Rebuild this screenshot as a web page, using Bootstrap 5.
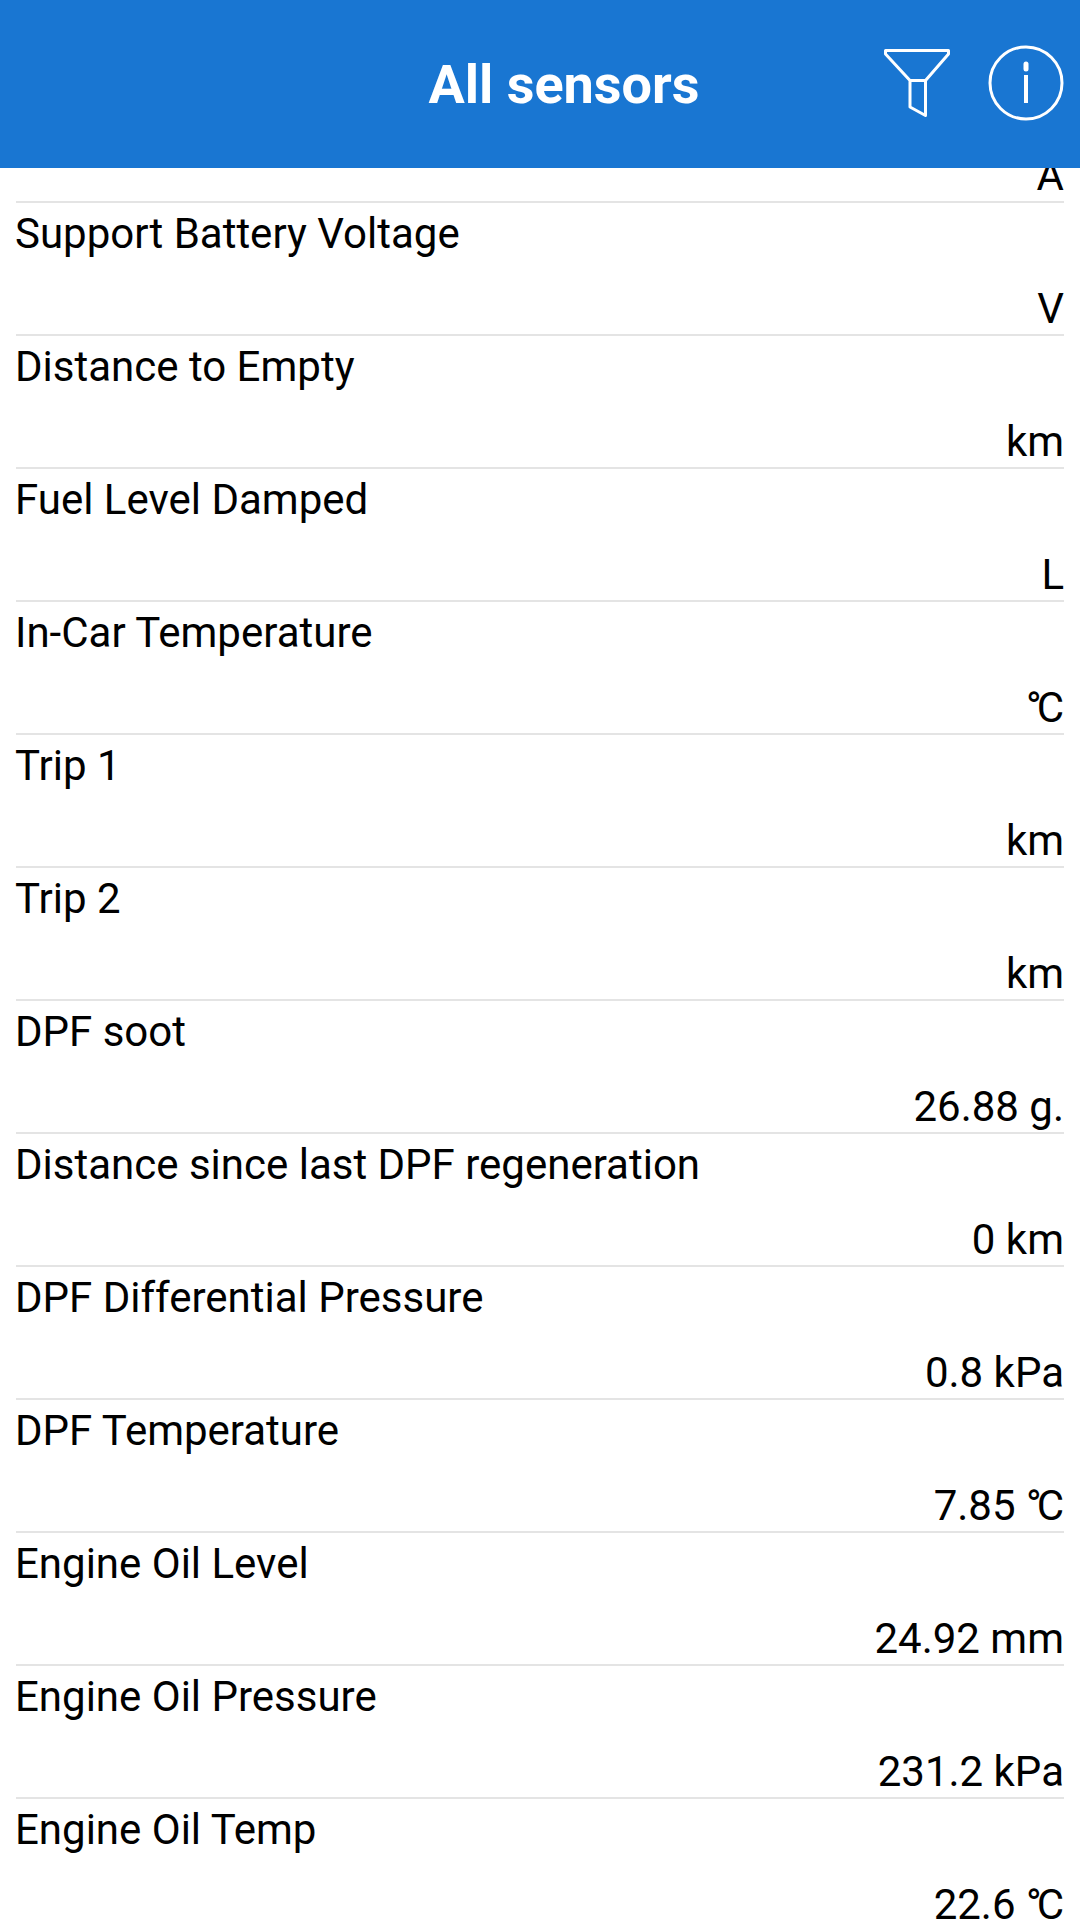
<!DOCTYPE html>
<html lang="en">

<head>
    <meta charset="UTF-8">
    <meta name="viewport" content="width=device-width, initial-scale=1.0">
    <title>All sensors</title>
    <link href="https://cdn.jsdelivr.net/npm/bootstrap@5.3.0/dist/css/bootstrap.min.css" rel="stylesheet">
    <style>
        html, body {
            height: 1920px;
            overflow: hidden;
        }

        body {
            font-family: Roboto, "Noto Sans CJK SC", sans-serif;
            color: #000;
        }

        .top-bar {
            height: 168px;
            background: #1976d2;
            z-index: 2;
        }

        .top-title {
            font-size: 54px;
            font-weight: 700;
            line-height: 1;
            left: 0;
            width: 1128px;
            top: 58px;
            text-align: center;
        }

        .top-icons {
            padding: 44px 15.5px 0 0;
            gap: 34.5px;
        }

        .sensor-list {
            margin-top: -98px;
        }

        .sensor-row {
            height: 133px;
            margin: 0 16px;
            border-bottom: 2px solid #e4e4e4;
            font-size: 42px;
            line-height: 50px;
        }

        .sensor-name {
            padding-top: 6px;
            margin-left: -1px;
        }

        .sensor-value {
            padding-top: 25px;
            text-align: right;
        }

        /* pulls the degree ring up against the C */
        .deg-ring {
            letter-spacing: -5px;
        }
    </style>
</head>

<body>
    <header class="top-bar position-relative d-flex justify-content-end text-white">
        <div class="top-title position-absolute">All sensors</div>
        <div class="top-icons d-flex align-items-start">
            <!-- filter -->
            <svg width="70" height="76" viewBox="0 0 70 76" fill="none" stroke="#fff" stroke-width="3" stroke-linejoin="round">
                <path d="M3.5 6.5H66.5V10L43.5 36.5V71.5L28 63V36.5L3.5 10Z" />
                <path d="M28 36.5H43.5" />
            </svg>
            <!-- info -->
            <svg width="78" height="78" viewBox="0 0 78 78" fill="none" stroke="#fff" stroke-width="3">
                <circle cx="39" cy="39" r="36" />
                <path d="M39 31V59" stroke-width="4" />
                <path d="M39 20V25" stroke-width="5" stroke-linecap="round" />
            </svg>
        </div>
    </header>

    <main class="sensor-list" id="sensor-list"></main>

    <script>
        const sensors = [
            ['', 'A'],
            ['Support Battery Voltage', 'V'],
            ['Distance to Empty', 'km'],
            ['Fuel Level Damped', 'L'],
            ['In-Car Temperature', '°C'],
            ['Trip 1', 'km'],
            ['Trip 2', 'km'],
            ['DPF soot', '26.88 g.'],
            ['Distance since last DPF regeneration', '0 km'],
            ['DPF Differential Pressure', '0.8 kPa'],
            ['DPF Temperature', '7.85 °C'],
            ['Engine Oil Level', '24.92 mm'],
            ['Engine Oil Pressure', '231.2 kPa'],
            ['Engine Oil Temp', '22.6 °C']
        ];

        const list = document.getElementById('sensor-list');
        sensors.forEach(([name, value]) => {
            const shown = value.replace('°', '<span class="deg-ring">°</span>');
            list.innerHTML += `<div class="sensor-row">
                <div class="sensor-name">${name || '&nbsp;'}</div>
                <div class="sensor-value">${shown}</div>
            </div>`;
        });
    </script>
    <script src="https://cdn.jsdelivr.net/npm/bootstrap@5.3.0/dist/js/bootstrap.bundle.min.js"></script>
</body>

</html>
